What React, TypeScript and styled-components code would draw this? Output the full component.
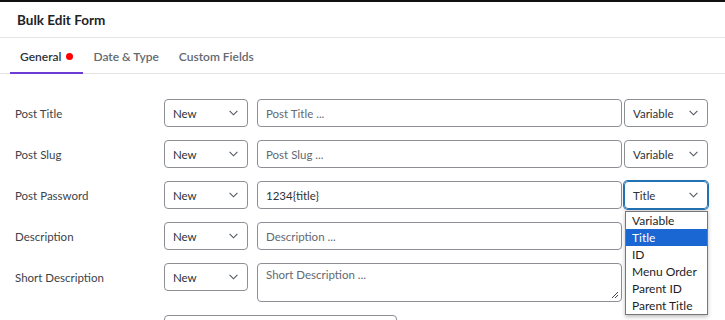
import React from "react";
import styled, { createGlobalStyle } from "styled-components";

// 全局样式
const GlobalStyle = createGlobalStyle`
  html, body {
    margin: 0;
    padding: 0;
    background: #fff;
  }
  body {
    font-family: Lato, "Noto Sans", Arial, sans-serif;
    color: #1e1e1e;
    overflow: hidden;
  }
`;

const Modal = styled.div`
  width: 725px;
  height: 320px;
  border-top: 2px solid #111;
  box-sizing: border-box;
  overflow: hidden;
`;

const Header = styled.div`
  height: 35px;
  display: flex;
  align-items: center;
  padding-left: 17px;
  font-size: 13.5px;
  font-weight: 700;
  color: #1d2327;
  border-bottom: 1px solid #e2e4e7;
`;

const Tabs = styled.div`
  display: flex;
  height: 35px;
  padding-left: 10px;
  border-bottom: 1px solid #e2e4e7;
`;

const Tab = styled.div<{ $active?: boolean }>`
  display: flex;
  align-items: center;
  gap: 5px;
  padding: 3px 10px 0;
  font-size: 12px;
  font-weight: 600;
  color: ${(p) => (p.$active ? "#2c3338" : "#646970")};
  border-bottom: 2px solid ${(p) => (p.$active ? "#6c3bd5" : "transparent")};
  margin-bottom: -1px;
`;

const Dot = styled.span`
  width: 7px;
  height: 7px;
  border-radius: 50%;
  background: #f00;
`;

const Form = styled.div`
  display: flex;
  flex-direction: column;
  gap: 13px;
  padding: 25px 17px 0 15px;
`;

const Row = styled.div`
  display: flex;
  align-items: flex-start;
`;

const Label = styled.div`
  width: 149px;
  flex: none;
  height: 28px;
  display: flex;
  align-items: center;
  font-size: 11.5px;
  color: #3c434a;
`;

const Select = styled.div<{ $focused?: boolean; $width?: number }>`
  position: relative;
  box-sizing: border-box;
  width: ${(p) => p.$width ?? 84}px;
  height: 28px;
  flex: none;
  display: flex;
  align-items: center;
  justify-content: space-between;
  padding: 0 9px 0 8px;
  border: 1px solid ${(p) => (p.$focused ? "#2271b1" : "#8c8f94")};
  box-shadow: ${(p) =>
    p.$focused ? "0 0 0 1px #2271b1, 0 2px 4px rgba(0,0,0,0.2)" : "none"};
  border-radius: 4px;
  font-size: 11.5px;
  color: #2c3338;
`;

const TextBox = styled.div<{ $filled?: boolean; $tall?: boolean }>`
  box-sizing: border-box;
  flex: 1;
  height: ${(p) => (p.$tall ? 39 : 28)}px;
  margin-left: 9px;
  display: flex;
  align-items: ${(p) => (p.$tall ? "flex-start" : "center")};
  padding: ${(p) => (p.$tall ? "4px 8px" : "0 8px")};
  border: 1px solid #8c8f94;
  border-radius: 4px;
  font-size: 11.5px;
  color: ${(p) => (p.$filled ? "#2c3338" : "#646970")};
  position: relative;
`;

const Extra = styled.div`
  margin-left: 2px;
  flex: none;
  width: 84px;
`;

const Grip = styled.svg`
  position: absolute;
  right: 2px;
  bottom: 2px;
`;

const Menu = styled.div`
  position: absolute;
  top: 29px;
  left: 0;
  width: 83px;
  box-sizing: border-box;
  background: #fff;
  border: 1px solid #767676;
  box-shadow: 0 2px 4px rgba(0, 0, 0, 0.25);
  z-index: 10;
`;

const Option = styled.div<{ $selected?: boolean }>`
  height: 17px;
  line-height: 17px;
  padding-left: 6px;
  font-size: 12px;
  color: ${(p) => (p.$selected ? "#fff" : "#1e1e1e")};
  background: ${(p) => (p.$selected ? "#1a66d2" : "transparent")};
`;

const Chevron = () => (
  <svg width="9" height="6" viewBox="0 0 9 6">
    <path d="M0.6 0.8 L4.5 4.8 L8.4 0.8" fill="none" stroke="#50575e" strokeWidth="1.1" />
  </svg>
);

const options = ["Variable", "Title", "ID", "Menu Order", "Parent ID", "Parent Title"];

const rows = [
  { label: "Post Title", text: "Post Title ...", variable: "Variable" },
  { label: "Post Slug", text: "Post Slug ...", variable: "Variable" },
  { label: "Post Password", text: "1234{title}", filled: true, variable: "Title", open: true },
  { label: "Description", text: "Description ..." },
  { label: "Short Description", text: "Short Description ...", tall: true },
];

export default function App() {
  return (
    <Modal>
      <GlobalStyle />
      <Header>Bulk Edit Form</Header>
      <Tabs>
        <Tab $active>
          General <Dot />
        </Tab>
        <Tab>Date &amp; Type</Tab>
        <Tab>Custom Fields</Tab>
      </Tabs>
      <Form>
        {rows.map((r) => (
          <Row key={r.label}>
            <Label>{r.label}</Label>
            <Select>
              New <Chevron />
            </Select>
            <TextBox $filled={r.filled} $tall={r.tall}>
              {r.text}
              {r.tall && (
                <Grip width="8" height="8" viewBox="0 0 8 8">
                  <path d="M7 1 L1 7 M7 4 L4 7" stroke="#444" strokeWidth="1" />
                </Grip>
              )}
            </TextBox>
            <Extra>
              {r.variable && (
                <Select $focused={r.open}>
                  {r.variable} <Chevron />
                  {r.open && (
                    <Menu>
                      {options.map((o) => (
                        <Option key={o} $selected={o === "Title"}>
                          {o}
                        </Option>
                      ))}
                    </Menu>
                  )}
                </Select>
              )}
            </Extra>
          </Row>
        ))}
        <Row>
          <Label />
          <Select $width={233} />
        </Row>
      </Form>
    </Modal>
  );
}
